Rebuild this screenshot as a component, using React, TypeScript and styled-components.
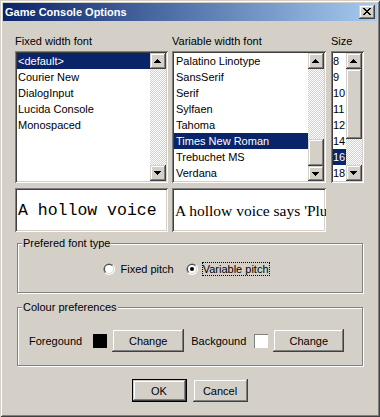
import React from "react";
import styled, { createGlobalStyle } from "styled-components";

const GlobalStyle = createGlobalStyle`
  html, body {
    margin: 0;
    padding: 0;
    background: #d4d0c8;
  }
  body {
    font-family: "Liberation Sans", Arial, sans-serif;
    font-size: 11px;
    color: #000;
  }
  * {
    box-sizing: border-box;
  }
`;

const raised = `
  background-color: #d4d0c8;
  box-shadow: inset -1px -1px #404040, inset 1px 1px #d4d0c8,
    inset -2px -2px #808080, inset 2px 2px #fff;
`;

const sunken = `
  box-shadow: inset 1px 1px #808080, inset -1px -1px #fff,
    inset 2px 2px #404040, inset -2px -2px #d4d0c8;
`;

const Window = styled.div`
  width: 380px;
  height: 417px;
  padding: 3px;
  background: #d4d0c8;
  box-shadow: inset 1px 1px #d4d0c8, inset -1px -1px #404040,
    inset 2px 2px #fff, inset -2px -2px #808080;
  display: flex;
  flex-direction: column;
`;

const TitleBar = styled.div`
  height: 18px;
  display: flex;
  align-items: center;
  justify-content: space-between;
  padding: 0 2px;
  background: linear-gradient(to right, #0a246a, #a6caf0);
`;

const Title = styled.span`
  color: #fff;
  font-weight: bold;
  font-size: 11px;
  line-height: 13px;
`;

const CloseButton = styled.div`
  ${raised}
  width: 16px;
  height: 14px;
  padding: 3px 0 0 4px;
  display: flex;
  align-items: flex-start;
`;

const Body = styled.div`
  padding: 14px 13px 0 12px;
  display: flex;
  flex-direction: column;
`;

const FontGrid = styled.div`
  display: grid;
  grid-template-columns: 153px 154px 34px;
  column-gap: 4px;
`;

const Label = styled.div`
  line-height: 13px;
  height: 16px;
  white-space: nowrap;
`;

const SizeLabel = styled(Label)`
  padding-left: 1px;
`;

const ListBox = styled.div<{ $offset?: number }>`
  ${sunken}
  height: 132px;
  margin-left: ${(p) => p.$offset ?? 0}px;
  padding: 2px;
  background: #fff;
  display: flex;
`;

const Items = styled.div`
  flex: 1;
  overflow: hidden;
`;

const Item = styled.div<{ $selected?: boolean; $pad: number }>`
  height: 16px;
  line-height: 16px;
  padding-left: ${(p) => p.$pad}px;
  white-space: nowrap;
  background: ${(p) => (p.$selected ? "#0a246a" : "transparent")};
  color: ${(p) => (p.$selected ? "#fff" : "#000")};
`;

const ScrollBar = styled.div`
  width: 16px;
  flex-shrink: 0;
  display: flex;
  flex-direction: column;
`;

const ArrowButton = styled.div`
  ${raised}
  width: 16px;
  height: 16px;
  padding: 6px 0 0 4px;
  display: flex;
  align-items: flex-start;
`;

const Track = styled.div`
  flex: 1;
  background-image: repeating-conic-gradient(#fff 0% 25%, #d4d0c8 0% 50%);
  background-size: 2px 2px;
  display: flex;
  flex-direction: column;
`;

const Thumb = styled.div<{ $top: number; $size: number }>`
  ${raised}
  margin-top: ${(p) => p.$top}px;
  height: ${(p) => p.$size}px;
`;

const Preview = styled.div<{ $font: string; $size: number; $pad: number }>`
  ${sunken}
  height: 44px;
  margin-top: 5px;
  background: #fff;
  overflow: hidden;
  display: flex;
  align-items: center;
  padding: 1px 0 0 ${(p) => p.$pad}px;
  font-family: ${(p) => p.$font};
  font-size: ${(p) => p.$size}px;
  white-space: nowrap;
`;

const GroupBox = styled.div<{ $height: number; $gap: number }>`
  position: relative;
  width: 346px;
  height: ${(p) => p.$height}px;
  margin: ${(p) => p.$gap}px 0 0 2px;
  border: 1px solid #808080;
  box-shadow: inset 1px 1px #fff, 1px 1px #fff;
`;

const Legend = styled.span`
  position: absolute;
  top: -7px;
  left: 4px;
  padding: 0 1px;
  background: #d4d0c8;
  line-height: 13px;
`;

const RadioRow = styled.div`
  display: flex;
  align-items: center;
  justify-content: center;
  padding: 8px 7px 0 0;
  height: 42px;
`;

const RadioOption = styled.label`
  display: flex;
  align-items: center;
  gap: 4px;
  margin-right: 11px;
  &:last-child {
    margin-right: 0;
  }
`;

const RadioText = styled.span<{ $focused?: boolean }>`
  line-height: 12px;
  border: 1px dotted ${(p) => (p.$focused ? "#000" : "transparent")};
`;

const ColourRow = styled.div`
  display: flex;
  align-items: center;
  padding: 21px 0 0 11px;
`;

const ColourLabel = styled.span<{ $gap: number }>`
  margin-right: ${(p) => p.$gap}px;
`;

const Swatch = styled.div<{ $color: string }>`
  width: 14px;
  height: 14px;
  background: ${(p) => p.$color};
  box-shadow: ${(p) => (p.$color === "#000" ? "none" : "inset 1px 1px #808080")};
  margin-right: 5px;
`;

const Button = styled.button<{ $width: number; $default?: boolean }>`
  ${raised}
  width: ${(p) => p.$width}px;
  height: 23px;
  border: ${(p) => (p.$default ? "1px solid #000" : "none")};
  padding: 0;
  font-family: "Liberation Sans", Arial, sans-serif;
  font-size: 11px;
  color: #000;
`;

const ChangeButton = styled(Button)`
  margin-right: 7px;
`;

const Footer = styled.div`
  display: flex;
  justify-content: center;
  gap: 6px;
  margin-top: 13px;
`;

const ArrowUp = () => (
  <svg width="7" height="4" shapeRendering="crispEdges">
    <rect x="3" y="0" width="1" height="1" />
    <rect x="2" y="1" width="3" height="1" />
    <rect x="1" y="2" width="5" height="1" />
    <rect x="0" y="3" width="7" height="1" />
  </svg>
);

const ArrowDown = () => (
  <svg width="7" height="4" shapeRendering="crispEdges">
    <rect x="0" y="0" width="7" height="1" />
    <rect x="1" y="1" width="5" height="1" />
    <rect x="2" y="2" width="3" height="1" />
    <rect x="3" y="3" width="1" height="1" />
  </svg>
);

const CloseIcon = () => (
  <svg width="8" height="7" shapeRendering="crispEdges">
    <rect x="0" y="0" width="2" height="1" />
    <rect x="6" y="0" width="2" height="1" />
    <rect x="1" y="1" width="2" height="1" />
    <rect x="5" y="1" width="2" height="1" />
    <rect x="2" y="2" width="4" height="1" />
    <rect x="3" y="3" width="2" height="1" />
    <rect x="2" y="4" width="4" height="1" />
    <rect x="1" y="5" width="2" height="1" />
    <rect x="5" y="5" width="2" height="1" />
    <rect x="0" y="6" width="2" height="1" />
    <rect x="6" y="6" width="2" height="1" />
  </svg>
);

const RadioIcon = ({ checked }: { checked?: boolean }) => (
  <svg width="12" height="12" viewBox="0 0 12 12">
    <circle cx="6" cy="6" r="6" fill="#fff" />
    <path d="M1.76 10.24 A6 6 0 0 1 10.24 1.76 Z" fill="#808080" />
    <circle cx="6" cy="6" r="5" fill="#d4d0c8" />
    <path d="M2.46 9.54 A5 5 0 0 1 9.54 2.46 Z" fill="#404040" />
    <circle cx="6" cy="6" r="4" fill="#fff" />
    {checked && <circle cx="6" cy="6" r="2" fill="#000" />}
  </svg>
);

type ListProps = {
  items: string[];
  selected: string;
  pad: number;
  thumb?: { top: number; size: number };
  offset?: number;
};

const FontList = ({ items, selected, pad, thumb, offset }: ListProps) => (
  <ListBox $offset={offset}>
    <Items>
      {items.map((it) => (
        <Item key={it} $pad={pad} $selected={it === selected}>
          {it}
        </Item>
      ))}
    </Items>
    <ScrollBar>
      <ArrowButton>
        <ArrowUp />
      </ArrowButton>
      <Track>{thumb && <Thumb $top={thumb.top} $size={thumb.size} />}</Track>
      <ArrowButton>
        <ArrowDown />
      </ArrowButton>
    </ScrollBar>
  </ListBox>
);

const fixedFonts = ["<default>", "Courier New", "DialogInput", "Lucida Console", "Monospaced"];
const variableFonts = [
  "Palatino Linotype",
  "SansSerif",
  "Serif",
  "Sylfaen",
  "Tahoma",
  "Times New Roman",
  "Trebuchet MS",
  "Verdana",
];
const sizes = ["8", "9", "10", "11", "12", "14", "16", "18"];

export default function App() {
  return (
    <>
      <GlobalStyle />
      <Window>
        <TitleBar>
          <Title>Game Console Options</Title>
          <CloseButton>
            <CloseIcon />
          </CloseButton>
        </TitleBar>
        <Body>
          <FontGrid>
            <Label>Fixed width font</Label>
            <Label>Variable width font</Label>
            <SizeLabel>Size</SizeLabel>

            <FontList items={fixedFonts} selected="<default>" pad={1} />
            <FontList
              items={variableFonts}
              selected="Times New Roman"
              pad={2}
              thumb={{ top: 70, size: 27 }}
            />
            <FontList
              items={sizes}
              selected="16"
              pad={0}
              offset={1}
              thumb={{ top: 0, size: 70 }}
            />

            <Preview $font={'"Liberation Mono", "Courier New", monospace'} $size={16.5} $pad={3}>
              A hollow voice
            </Preview>
            <Preview $font={'"Liberation Serif", "Times New Roman", serif'} $size={15.5} $pad={3}>
              A hollow voice says 'Plugh'.
            </Preview>
          </FontGrid>

          <GroupBox $height={50} $gap={11}>
            <Legend>Prefered font type</Legend>
            <RadioRow>
              <RadioOption>
                <RadioIcon />
                <RadioText>Fixed pitch</RadioText>
              </RadioOption>
              <RadioOption>
                <RadioIcon checked />
                <RadioText $focused>Variable pitch</RadioText>
              </RadioOption>
            </RadioRow>
          </GroupBox>

          <GroupBox $height={59} $gap={14}>
            <Legend>Colour preferences</Legend>
            <ColourRow>
              <ColourLabel $gap={11}>Foregound</ColourLabel>
              <Swatch $color="#000" />
              <ChangeButton $width={72}>Change</ChangeButton>
              <ColourLabel $gap={8}>Backgound</ColourLabel>
              <Swatch $color="#fff" />
              <Button $width={71}>Change</Button>
            </ColourRow>
          </GroupBox>

          <Footer>
            <Button $width={55} $default>
              OK
            </Button>
            <Button $width={55}>Cancel</Button>
          </Footer>
        </Body>
      </Window>
    </>
  );
}
